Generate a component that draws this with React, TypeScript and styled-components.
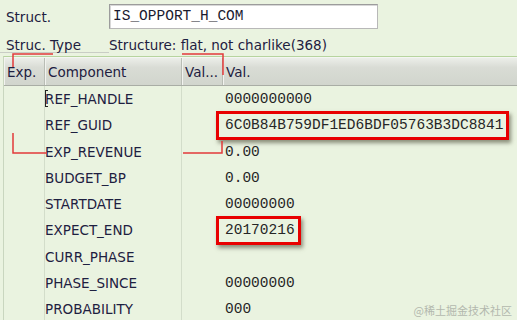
import React from 'react'
import styled, { createGlobalStyle } from 'styled-components'

const GlobalStyle = createGlobalStyle`
  html, body {
    margin: 0;
    padding: 0;
    background: #eaf3e0;
  }
`

const sans = `"DejaVu Sans", Tahoma, sans-serif`
const mono = `"Liberation Mono", "Courier New", monospace`

const Page = styled.div`
  position: relative;
  width: 517px;
  height: 320px;
  overflow: hidden;
  background: #eaf3e0;
  font-family: ${sans};
  font-size: 13.5px;
  color: #1e2040;
`

const FieldRow = styled.div`
  display: flex;
  align-items: center;
  height: 25px;
  margin-top: 4px;
`

const Label = styled.div`
  width: 109px;
  padding-left: 6px;
  box-sizing: border-box;
`

const InputBox = styled.div`
  width: 269px;
  height: 25px;
  box-sizing: border-box;
  background: #fff;
  border: 1px solid #9c9c9c;
  border-right-color: #b8b8b8;
  border-bottom-color: #b8b8b8;
  box-shadow: inset 1px 1px 0 #d8d8d8;
  padding-left: 3px;
  font-family: ${mono};
  font-size: 14.5px;
  line-height: 23px;
  color: #1a1a30;
`

const TypeRow = styled.div`
  display: flex;
  height: 27px;
  padding-top: 5px;
  box-sizing: border-box;
  line-height: 22px;
`

const TypeLabel = styled(Label)`
  height: 19px;
  line-height: 22px;
  border-bottom: 1px solid #c9cdc5;
  padding-left: 6px;
`

const Table = styled.div`
  margin-left: 3px;
  border-top: 1px solid #b7d49f;
  border-left: 1px solid #c9d6bf;
`

const cols = '41px 137px 41px 1fr'

const HeaderRow = styled.div`
  display: grid;
  grid-template-columns: ${cols};
  height: 29px;
  box-sizing: border-box;
  background: linear-gradient(#eceee9, #d9dcd5 35%, #d1d5cd);
  border-top: 1px solid #f4f6f2;
  border-bottom: 1px solid #a9ada5;
`

const HeadCell = styled.div`
  padding-left: 3px;
  line-height: 28px;
  border-right: 1px solid #b9bdb5;
  box-shadow: inset 1px 0 0 #f2f3ef;
  white-space: nowrap;
  overflow: hidden;

  &:last-child {
    border-right: none;
  }
`

const Row = styled.div`
  display: grid;
  grid-template-columns: ${cols};
  height: 26.3px;
  line-height: 26.3px;
`

const Cell = styled.div<{ $divider?: boolean }>`
  border-right: ${p => (p.$divider ? '1px solid #d3ddca' : 'none')};
  white-space: nowrap;
`

const ValueCell = styled.div`
  padding-left: 2px;
  font-family: ${mono};
  font-size: 14.5px;
  color: #262626;
  white-space: nowrap;
`

const Caret = styled.span`
  display: inline-block;
  width: 2px;
  height: 15px;
  vertical-align: -3px;
  border: 1px solid #222;
  border-right: none;
  margin-right: -3px;
`

const Highlight = styled.span`
  display: inline-block;
  margin: -2px 0 -2px -9px;
  padding: 0 3px 0 6px;
  line-height: 23px;
  border: 3px solid #e80000;
  box-shadow: 2px 3px 4px rgba(60, 60, 40, 0.55);
`

const Overlay = styled.svg`
  position: absolute;
  left: 0;
  top: 0;
  pointer-events: none;
`

const Watermark = styled.div`
  position: absolute;
  right: 5px;
  bottom: 2px;
  font-family: "Noto Sans CJK SC", sans-serif;
  font-size: 11px;
  color: #b3b8ae;
`

type Item = { name: string; value: string; mark?: boolean; caret?: boolean }

const items: Item[] = [
  { name: 'REF_HANDLE', value: '0000000000', caret: true },
  { name: 'REF_GUID', value: '6C0B84B759DF1ED6BDF05763B3DC8841', mark: true },
  { name: 'EXP_REVENUE', value: '0.00' },
  { name: 'BUDGET_BP', value: '0.00' },
  { name: 'STARTDATE', value: '00000000' },
  { name: 'EXPECT_END', value: '20170216', mark: true },
  { name: 'CURR_PHASE', value: '' },
  { name: 'PHASE_SINCE', value: '00000000' },
  { name: 'PROBABILITY', value: '000' }
]

export default function App() {
  return (
    <Page>
      <GlobalStyle />
      <FieldRow>
        <Label>Struct.</Label>
        <InputBox>IS_OPPORT_H_COM</InputBox>
      </FieldRow>
      <TypeRow>
        <TypeLabel>Struc. Type</TypeLabel>
        <div>Structure: flat, not charlike(368)</div>
      </TypeRow>
      <Table>
        <HeaderRow>
          <HeadCell>Exp.</HeadCell>
          <HeadCell>Component</HeadCell>
          <HeadCell>Val...</HeadCell>
          <HeadCell>Val.</HeadCell>
        </HeaderRow>
        {items.map(it => (
          <Row key={it.name}>
            <Cell $divider />
            <Cell $divider>
              {it.caret && <Caret />}
              {it.name}
            </Cell>
            <Cell />
            <ValueCell>
              {it.mark ? <Highlight>{it.value}</Highlight> : it.value}
            </ValueCell>
          </Row>
        ))}
      </Table>
      <Overlay width="517" height="320">
        <g fill="none" stroke="#e23a3a" strokeWidth="1.5">
          <path d="M13 67 V54 H53" />
          <path d="M182 54 H223 V75" />
          <path d="M13 133 V153 H47" />
          <path d="M183 153 H222 V141" />
        </g>
      </Overlay>
      <Watermark>@稀土掘金技术社区</Watermark>
    </Page>
  )
}
